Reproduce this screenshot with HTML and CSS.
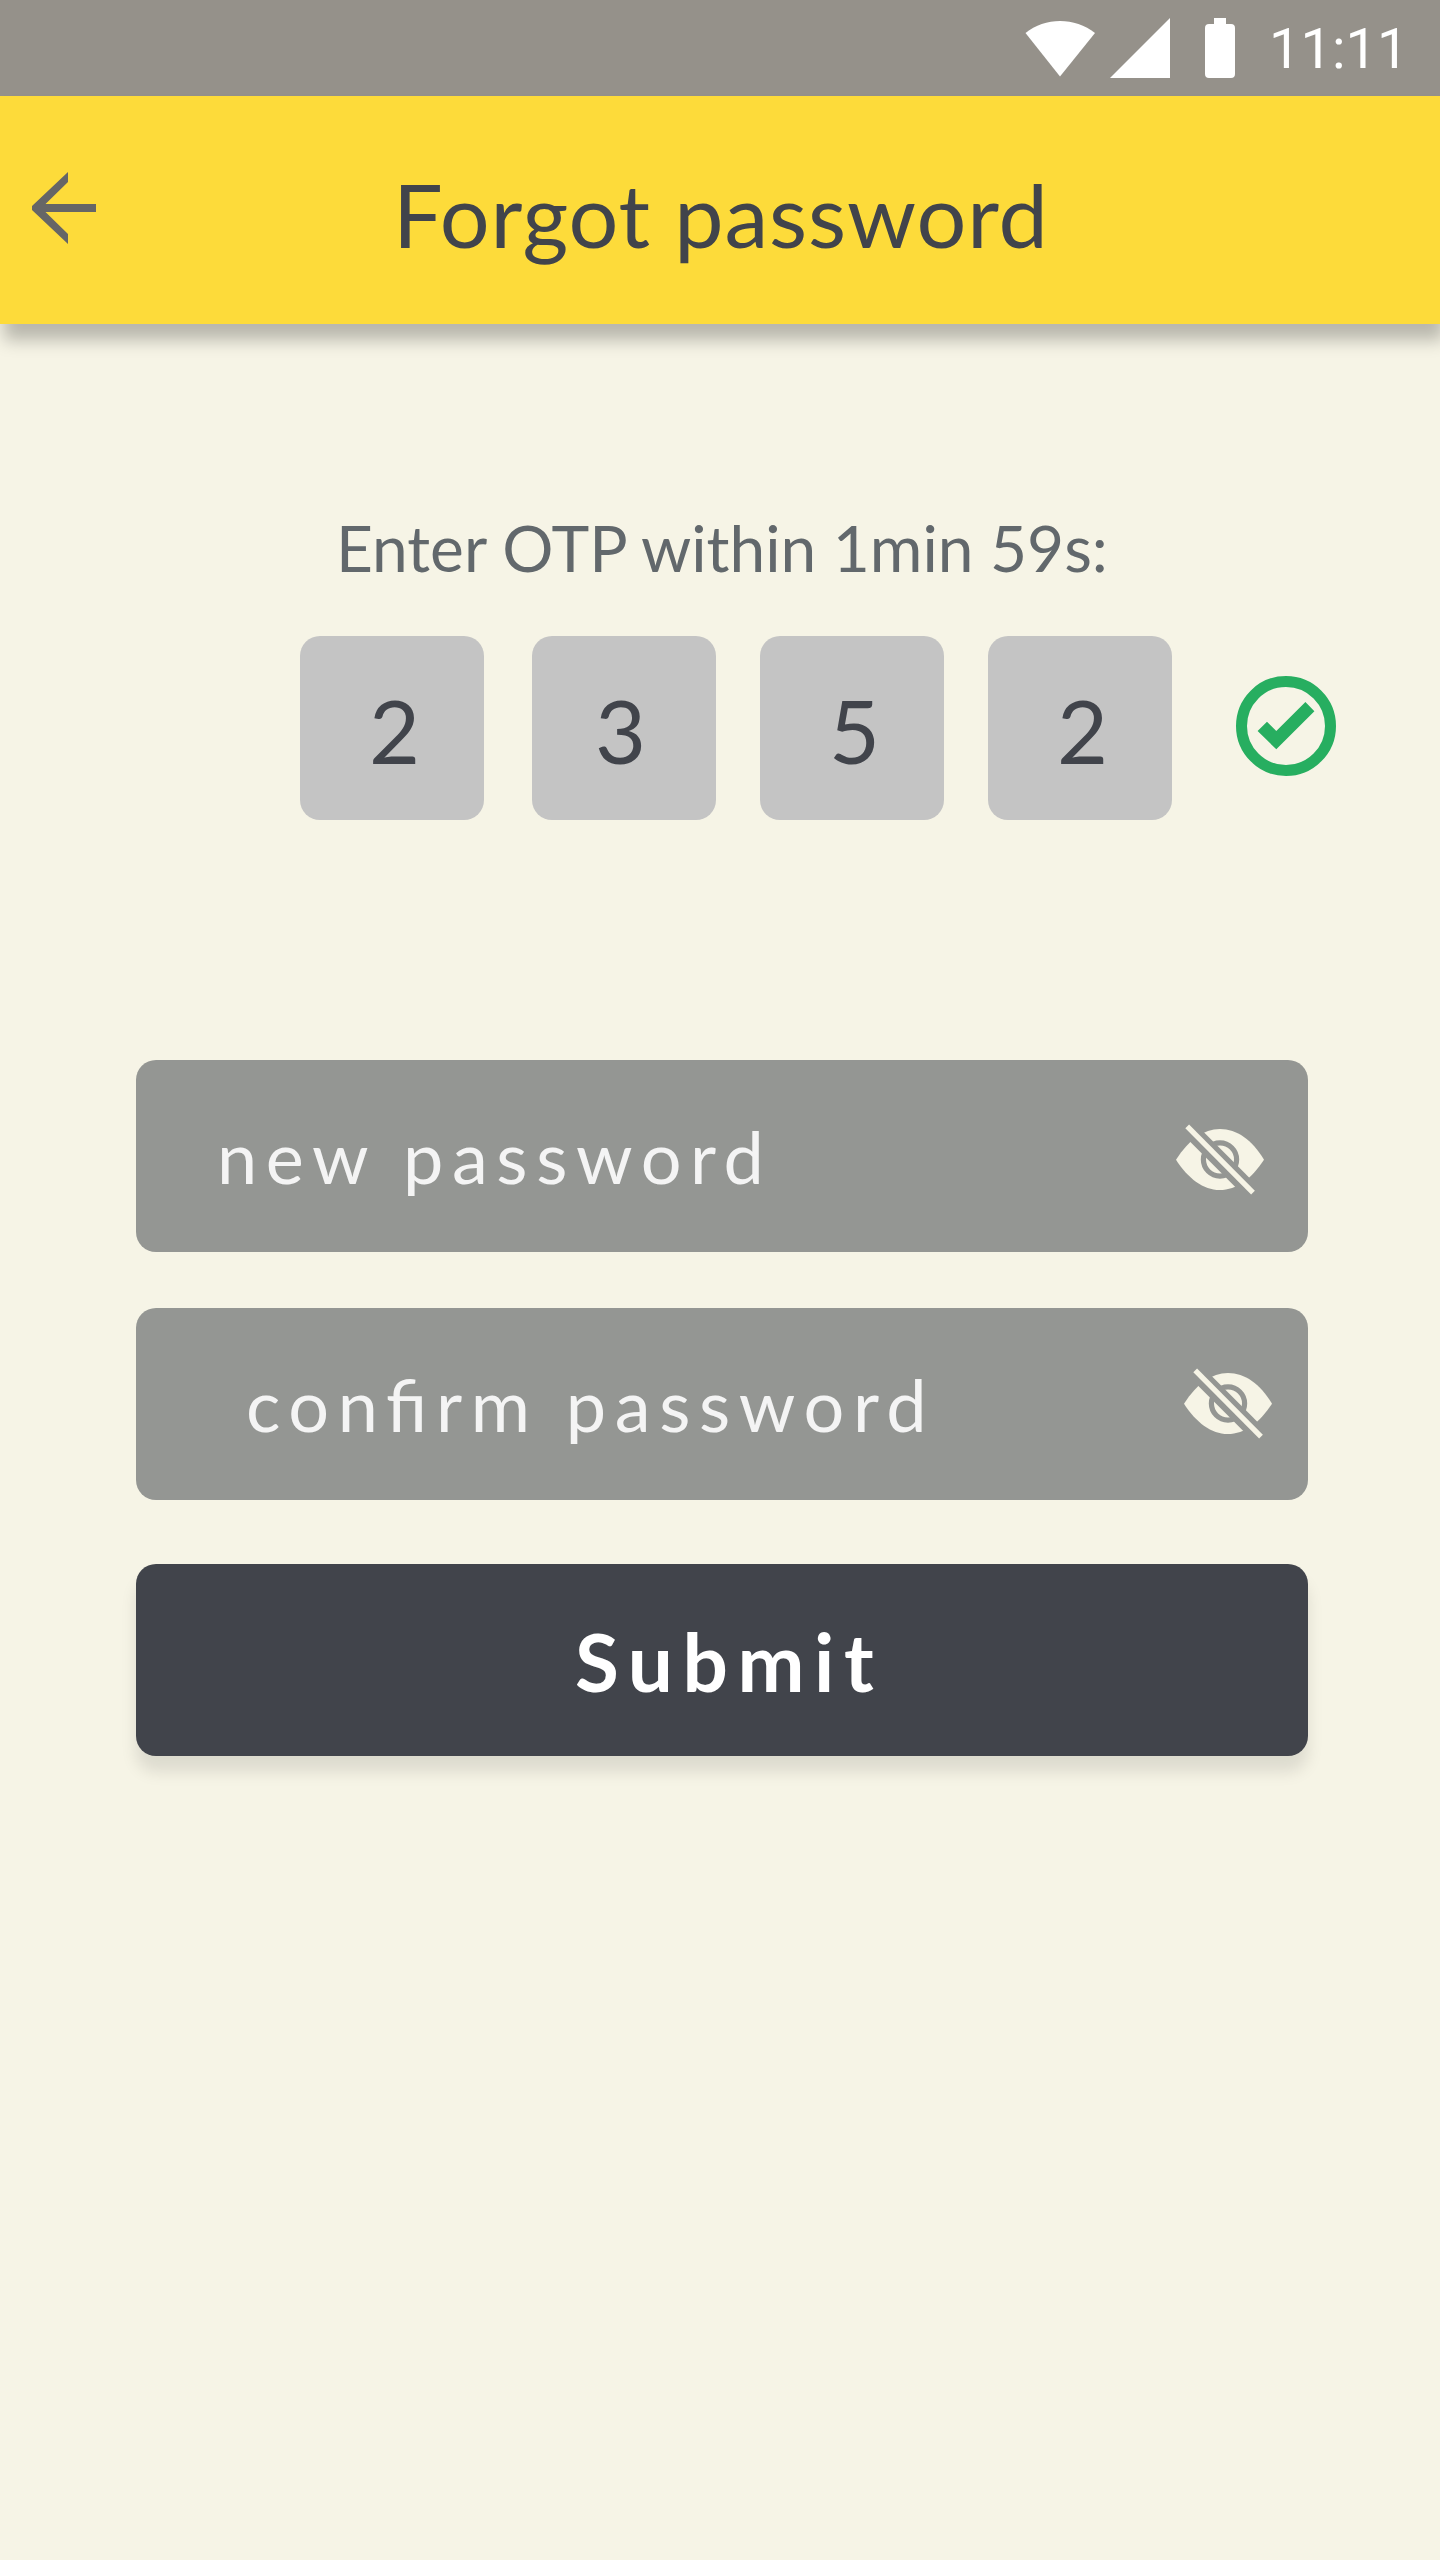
FILE: index.html
```html
<!DOCTYPE html>
<html lang="en">
<head>
<meta charset="utf-8">
<title>Forgot password</title>
<link rel="stylesheet" href="styles.css">
</head>
<body>
<svg class="sprite" aria-hidden="true">
  <symbol id="eye-off" viewBox="0 0 88 72">
    <path fill="#f6f4e6" d="M0 35.700C13 15.500 27.500 5 44 5C61 5 76 16 88 35.700C76 54 61 66 43.500 66C27.500 66 12 54.500 0 35.700Z"/>
    <circle cx="44" cy="35.500" r="16.600" fill="none" stroke="#949693" stroke-width="5.200"/>
    <path fill="none" stroke="#949693" stroke-width="16.500" d="M6 -2L81 73"/>
    <path fill="none" stroke="#f6f4e6" stroke-width="5.300" d="M11.200 2.400L77 68.600"/>
  </symbol>
</svg>
<div class="screen">
  <div class="status">
    <svg class="wifi" width="70" height="56" viewBox="0 0 70 56"><path d="M35 55.500L.5 12C20-4 50-4 70 12Z"/></svg>
    <svg class="signal" width="60" height="60" viewBox="0 0 60 60"><path d="M0 60H60V0Z"/></svg>
    <svg class="battery" width="30" height="60" viewBox="0 0 30 60"><path d="M9 0H21V6H26A4 4 0 0 1 30 10V56A4 4 0 0 1 26 60H4A4 4 0 0 1 0 56V10A4 4 0 0 1 4 6H9Z"/></svg>
    <span class="clock">11:11</span>
  </div>
  <header class="appbar">
    <svg class="back" width="64" height="72" viewBox="0 0 64 72"><path d="M36 0V10L13.500 32H64V40H13.500L36 62V72L0 38V34Z"/></svg>
    <h1 class="title">Forgot password</h1>
  </header>
  <main class="content">
    <p class="prompt">Enter OTP within 1min 59s:</p>
    <div class="otp">
      <span class="digit">2</span>
      <span class="digit second">3</span>
      <span class="digit">5</span>
      <span class="digit">2</span>
      <svg class="valid" width="100" height="100" viewBox="0 0 100 100"><circle cx="50" cy="50" r="44.500" fill="none" stroke="#27ae60" stroke-width="11"/><path fill="#27ae60" d="M21.600 55L31 45.700L40.300 55L69.400 26L78.400 35.200L40.300 73.300Z"/></svg>
    </div>
    <form class="form">
      <div class="field"><span class="label">new password</span><svg class="eye" width="88" height="72"><use href="#eye-off"/></svg></div>
      <div class="field confirm"><span class="label">confirm password</span><svg class="eye" width="88" height="72"><use href="#eye-off"/></svg></div>
      <button class="submit" type="button">Submit</button>
    </form>
  </main>
</div>
</body>
</html>
```
FILE: styles.css
```css
* {
  box-sizing: border-box;
}

body {
  margin: 0;
  background: #f6f4e6;
  font-family: Lato, sans-serif;
}

.sprite {
  display: block;
  width: 0;
  height: 0;
}

.screen {
  width: 1440px;
  height: 2560px;
  overflow: hidden;
  background: #f6f4e6;
}

.status {
  display: flex;
  align-items: flex-start;
  height: 96px;
  padding-left: 1025px;
  background: #95918a;
  fill: #fff;
}

.wifi {
  margin-top: 21px;
}

.signal {
  margin: 18px 0 0 15px;
}

.battery {
  margin: 18px 0 0 35px;
}

.clock {
  margin-left: 34px;
  font: 56px/98px Roboto, sans-serif;
  color: #fff;
}

.appbar {
  display: flex;
  align-items: flex-start;
  height: 228px;
  padding-left: 32px;
  background: #fddb3a;
  box-shadow: 4px 16px 16px rgba(0, 0, 0, 0.25);
}

.back {
  margin-top: 76px;
  fill: #666;
}

.title {
  margin: 4px 0 0 297px;
  font-size: 88px;
  font-weight: 400;
  line-height: 228px;
  letter-spacing: 0.01em;
  color: #41444b;
}

.content {
  padding-top: 186px;
}

.prompt {
  margin: 0;
  padding-left: 336px;
  font-size: 64px;
  line-height: 76px;
  color: #62686c;
}

.otp {
  display: flex;
  column-gap: 44px;
  align-items: center;
  height: 184px;
  margin-top: 50px;
  padding-left: 300px;
}

.digit {
  width: 184px;
  height: 184px;
  padding: 2px 0 0 69px;
  border-radius: 20px;
  background: #c4c4c4;
  font-size: 88px;
  line-height: 184px;
  color: #41444b;
}

.second {
  margin-left: 4px;
  padding-left: 63px;
}

.valid {
  margin: 0 0 4px 20px;
}

.form {
  display: flex;
  flex-direction: column;
  width: 1172px;
  margin: 240px 0 0 136px;
}

.field {
  display: flex;
  align-items: center;
  justify-content: space-between;
  height: 192px;
  padding: 0 44px 0 81px;
  border-radius: 20px;
  background: #949693;
}

.label {
  font-size: 72px;
  letter-spacing: 0.12em;
  font-feature-settings: "liga" 1;
  color: #f4f4f4;
}

.eye {
  margin-top: 8px;
}

.confirm {
  margin-top: 56px;
  padding: 0 36px 0 110px;
}

.confirm .eye {
  margin-top: 0;
}

.submit {
  height: 192px;
  margin-top: 64px;
  padding: 2px 0 0 439px;
  border: 0;
  border-radius: 20px;
  background: #41444b;
  box-shadow: 0 16px 16px rgba(0, 0, 0, 0.1);
  font: 700 80px Lato, sans-serif;
  letter-spacing: 0.12em;
  text-align: left;
  color: #fff;
}
```
